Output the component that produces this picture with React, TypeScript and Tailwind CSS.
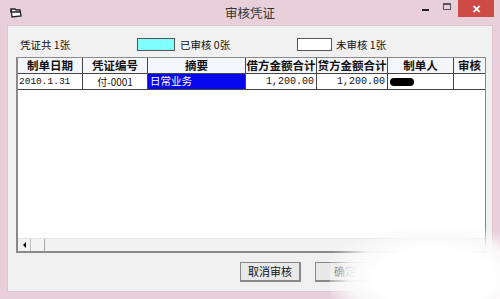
import React from "react"

const cols = [
  { label: "制单日期", w: "w-[65px]" },
  { label: "凭证编号", w: "w-[65px]" },
  { label: "摘要", w: "w-[98px]" },
  { label: "借方金额合计", w: "w-[71px]" },
  { label: "贷方金额合计", w: "w-[71px]" },
  { label: "制单人", w: "w-[66px]" },
  { label: "审核", w: "flex-1" },
]

export default function App() {
  return (
    <div
      className="w-[500px] h-[299px] bg-[#e8cfda] flex flex-col overflow-hidden relative"
      style={{ fontFamily: '"Noto Sans CJK SC", "Liberation Sans", sans-serif' }}
    >
      {/* Title bar */}
      <div className="h-[25px] flex items-start shrink-0">
        <div className="w-[86px] pl-[10px] pt-[7px]">
          <svg width="12" height="11" viewBox="0 0 12 11">
            <path d="M1 2 L5 2 L6 3 L10 3 L11 9 L2 10 Z" fill="#fff" stroke="#222" strokeWidth="1.3" />
            <path d="M1 2 L1 5 L10 5" fill="none" stroke="#222" strokeWidth="1.3" />
          </svg>
        </div>
        <div className="flex-1 text-center text-[12.5px] text-[#333] pt-[4px]">审核凭证</div>
        <div className="w-[86px] flex items-start">
          <div className="w-[22px] h-[17px] flex items-center justify-center">
            <div className="w-[7px] h-[2px] bg-[#222] mt-[2px]" />
          </div>
          <div className="w-[22px] h-[17px] flex items-center justify-center">
            <div className="w-[8px] h-[7px] border border-[#555] border-t-2 mb-[4px]" />
          </div>
          <div className="w-[36px] h-[17px] bg-[#cd4a45] flex items-center justify-center text-white text-[11px] font-bold">
            ✕
          </div>
        </div>
      </div>

      {/* Client area */}
      <div className="mx-[7px] flex-1 bg-[#f0f0f0] border border-[#dcc4cf] flex flex-col mb-[7px]">
        <div className="h-[31px] flex items-center text-[10.5px] text-[#111] pt-[6px]">
          <span className="ml-[12px] w-[117px]">凭证共 1张</span>
          <div className="w-[38px] h-[13px] bg-[#80ffff] border border-[#555]" />
          <span className="ml-[5px] w-[117px]">已审核 0张</span>
          <div className="w-[35px] h-[13px] bg-white border border-[#555]" />
          <span className="ml-[4px]">未审核 1张</span>
        </div>

        {/* Grid */}
        <div className="ml-[8px] mr-[6px] h-[196px] bg-white border-l-2 border-t border-[#8a8a8a] border-r border-b-2 flex flex-col">
          <div className="flex h-[16px] bg-[#f4f6fb] border-b border-[#444] text-[11.5px] font-bold text-[#111]">
            {cols.map((c, i) => (
              <div
                key={c.label}
                className={`${c.w} overflow-hidden whitespace-nowrap flex items-center justify-center leading-none ${i < cols.length - 1 ? "border-r border-[#444]" : ""}`}
              >
                {c.label}
              </div>
            ))}
          </div>
          <div className="flex h-[16px] border-b border-[#444] text-[10px] text-[#111] leading-none">
            <div className="w-[65px] border-r border-[#444] flex items-center pl-[1px] text-[9.5px]" style={{ fontFamily: '"Liberation Mono", "Noto Sans CJK SC", monospace' }}>
              2010.1.31
            </div>
            <div className="w-[65px] border-r border-[#444] flex items-center justify-center">付-0001</div>
            <div className="w-[98px] border-r border-[#444] bg-[#0808ee] text-white flex items-center pl-[2px] text-[10.5px]">日常业务</div>
            <div className="w-[71px] border-r border-[#444] flex items-center justify-end pr-[2px]" style={{ fontFamily: '"Liberation Mono", monospace' }}>
              1,200.00
            </div>
            <div className="w-[71px] border-r border-[#444] flex items-center justify-end pr-[2px]" style={{ fontFamily: '"Liberation Mono", monospace' }}>
              1,200.00
            </div>
            <div className="w-[66px] border-r border-[#444] flex items-center pl-[2px]">
              <div className="w-[24px] h-[8px] bg-black rounded-full" />
            </div>
            <div className="flex-1" />
          </div>
          <div className="flex-1" />
          {/* Horizontal scrollbar */}
          <div className="h-[13px] flex bg-[#f2f2f2] border-t border-[#e4e4e4]">
            <div className="w-[13px] flex items-center justify-center border-r border-[#bbb]">
              <div className="w-0 h-0 border-y-[3px] border-y-transparent border-r-[3px] border-r-black" />
            </div>
            <div className="w-[14px] border-r border-[#aaa] bg-[#f4f4f4]" />
            <div className="flex-1" />
          </div>
        </div>

        {/* Buttons */}
        <div className="flex-1 flex items-start pt-[9px] pl-[232px] gap-[14px] text-[11px] text-[#111]">
          <button className="w-[61px] h-[20px] bg-[#e8e8e8] border border-[#888] border-b-2 border-r-2 flex items-center justify-center">
            取消审核
          </button>
          <button className="w-[61px] h-[20px] bg-[#e8e8e8] border border-[#888] border-b-2 border-r-2 flex items-center justify-center">
            确定
          </button>
        </div>
      </div>

      {/* Watermark smudge */}
      <div
        className="absolute left-[330px] top-[228px] w-[190px] h-[90px] pointer-events-none"
        style={{ background: "radial-gradient(ellipse at 55% 55%, rgba(255,255,255,1) 40%, rgba(250,250,250,0.92) 58%, rgba(255,255,255,0) 78%)" }}
      />
    </div>
  )
}
